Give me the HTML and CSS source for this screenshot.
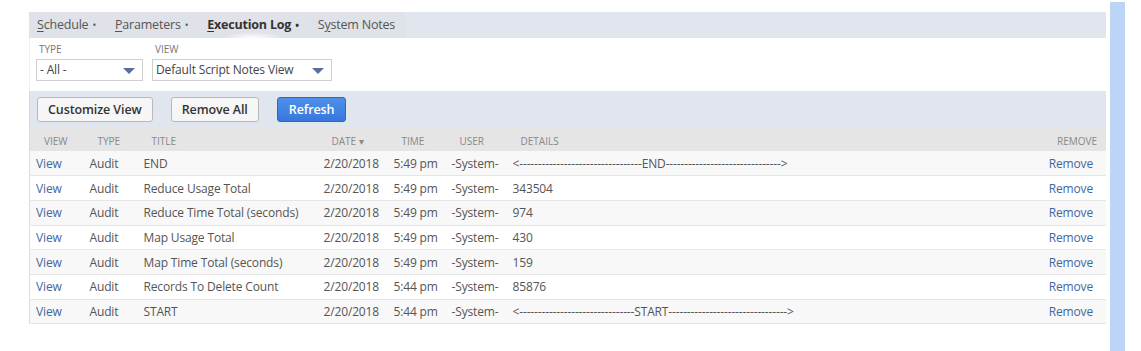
FILE: index.html
```html
<!DOCTYPE html>
<html>
<head>
    <title>Execution Log</title>
    <link rel="stylesheet" href="styles.css">
</head>
<body>
    <div id="page">
        <div id="main">
            <div class="tabbar">
                <div class="tabs">
                    <a href="#" class="tab"><u>S</u>chedule<span class="dot">&bull;</span></a>
                    <a href="#" class="tab"><u>P</u>arameters<span class="dot">&bull;</span></a>
                    <a href="#" class="tab active"><u>E</u>xecution Log<span class="dot">&bull;</span></a>
                    <a href="#" class="tab">S<u>y</u>stem Notes</a>
                </div>
            </div>
            <div class="filters">
                <div class="field">
                    <div class="flabel">TYPE</div>
                    <div class="sel sel_type"><span>- All -</span><i class="arrow"></i></div>
                </div>
                <div class="field">
                    <div class="flabel">VIEW</div>
                    <div class="sel sel_view"><span>Default Script Notes View</span><i class="arrow"></i></div>
                </div>
            </div>
            <div class="btnbar">
                <a href="#" class="btn">Customize View</a>
                <a href="#" class="btn">Remove All</a>
                <a href="#" class="btn primary">Refresh</a>
            </div>
            <table class="tbl_log">
                <colgroup>
                    <col style="width:54px">
                    <col style="width:54px">
                    <col style="width:180px">
                    <col style="width:70px">
                    <col style="width:58px">
                    <col style="width:61px">
                    <col>
                    <col style="width:100px">
                </colgroup>
                <tr class="head">
                    <td>VIEW</td>
                    <td>TYPE</td>
                    <td>TITLE</td>
                    <td>DATE &#9662;</td>
                    <td>TIME</td>
                    <td>USER</td>
                    <td>DETAILS</td>
                    <td class="rm">REMOVE</td>
                </tr>
                <tr>
                    <td><a href="#">View</a></td><td>Audit</td><td>END</td><td>2/20/2018</td><td>5:49 pm</td><td>-System-</td>
                    <td>&lt;---------------------------------END-------------------------------&gt;</td>
                    <td class="rm"><a href="#">Remove</a></td>
                </tr>
                <tr>
                    <td><a href="#">View</a></td><td>Audit</td><td>Reduce Usage Total</td><td>2/20/2018</td><td>5:49 pm</td><td>-System-</td>
                    <td>343504</td>
                    <td class="rm"><a href="#">Remove</a></td>
                </tr>
                <tr>
                    <td><a href="#">View</a></td><td>Audit</td><td>Reduce Time Total (seconds)</td><td>2/20/2018</td><td>5:49 pm</td><td>-System-</td>
                    <td>974</td>
                    <td class="rm"><a href="#">Remove</a></td>
                </tr>
                <tr>
                    <td><a href="#">View</a></td><td>Audit</td><td>Map Usage Total</td><td>2/20/2018</td><td>5:49 pm</td><td>-System-</td>
                    <td>430</td>
                    <td class="rm"><a href="#">Remove</a></td>
                </tr>
                <tr>
                    <td><a href="#">View</a></td><td>Audit</td><td>Map Time Total (seconds)</td><td>2/20/2018</td><td>5:49 pm</td><td>-System-</td>
                    <td>159</td>
                    <td class="rm"><a href="#">Remove</a></td>
                </tr>
                <tr>
                    <td><a href="#">View</a></td><td>Audit</td><td>Records To Delete Count</td><td>2/20/2018</td><td>5:44 pm</td><td>-System-</td>
                    <td>85876</td>
                    <td class="rm"><a href="#">Remove</a></td>
                </tr>
                <tr>
                    <td><a href="#">View</a></td><td>Audit</td><td>START</td><td>2/20/2018</td><td>5:44 pm</td><td>-System-</td>
                    <td>&lt;-------------------------------START--------------------------------&gt;</td>
                    <td class="rm"><a href="#">Remove</a></td>
                </tr>
            </table>
        </div>
        <div class="strip"></div>
    </div>
</body>
</html>
```

FILE: styles.css
```css
* {
    padding: 0px;
    margin: 0px;
    box-sizing: border-box;
}
body {
    font-family: "Open Sans", "Liberation Sans", sans-serif;
    color: #555;
    background-color: #fff;
}
a {
    text-decoration: none;
}
#page {
    display: flex;
    align-items: flex-start;
    height: 351px;
    overflow: hidden;
}
#main {
    width: 1077px;
    margin: 12px 0px 0px 29px;
}
.strip {
    width: 15px;
    height: 349px;
    margin: 2px 0px 0px 4px;
    background-color: #bcd4f6;
}
.tabbar {
    height: 26px;
    background-color: #e1e5ee;
}
.tabs {
    display: flex;
    width: 376px;
    height: 26px;
    padding-left: 8px;
    background-color: #dfe2e8;
}
.tab {
    font-size: 12.5px;
    letter-spacing: -0.2px;
    line-height: 26px;
    color: #555;
    margin-right: 19px;
    white-space: nowrap;
}
.tab u {
    text-decoration: underline;
    text-underline-offset: 2px;
}
.tab .dot {
    font-size: 10px;
    margin-left: 4px;
}
.tab.active {
    font-weight: bold;
    color: #333;
    background: radial-gradient(ellipse 30px 6px at 50% 100%, rgba(255,255,255,0.95), rgba(255,255,255,0));
}
.filters {
    display: flex;
    gap: 9px;
    height: 53px;
    padding: 5px 0px 0px 6px;
    border-left: 1px solid #f0f0f0;
}
.flabel {
    font-size: 10px;
    color: #777;
    line-height: 12px;
    padding-left: 3px;
    margin-bottom: 4px;
}
.sel {
    position: relative;
    height: 22px;
    border: 1px solid #cfcfcf;
    font-size: 12px;
    letter-spacing: -0.15px;
    line-height: 20px;
    color: #444;
    padding-left: 3px;
    background-color: #fff;
}
.sel_type {
    width: 107px;
}
.sel_view {
    width: 180px;
}
.arrow {
    position: absolute;
    right: 7px;
    top: 8px;
    width: 0;
    height: 0;
    border-left: 6px solid transparent;
    border-right: 6px solid transparent;
    border-top: 6px solid #56709c;
}
.btnbar {
    display: flex;
    gap: 18px;
    height: 36px;
    padding: 6px 0px 0px 7px;
    background-color: #e1e5ee;
    border-left: 1px solid #d6d9df;
}
.btn {
    height: 25px;
    line-height: 23px;
    padding: 0px 10px;
    font-size: 12.5px;
    letter-spacing: -0.1px;
    font-weight: 600;
    color: #333;
    background-color: #f6f6f6;
    border: 1px solid #b9b9b9;
    border-radius: 3px;
}
.btn.primary {
    color: #fff;
    padding: 0px 11px;
    background: linear-gradient(#4f90ea, #3777dc);
    border-color: #2d67c2;
}
.tbl_log {
    width: 100%;
    border-collapse: collapse;
    table-layout: fixed;
    font-size: 12px;
    letter-spacing: -0.15px;
    border-left: 1px solid #dcdcdc;
}
.tbl_log td {
    height: 24.7px;
    padding: 0px 6px;
    border-bottom: 1px solid #e6e6e6;
    white-space: nowrap;
    overflow: hidden;
}
.tbl_log tr:nth-child(even) td {
    background-color: #f8f8f8;
}
.tbl_log tr.head td {
    height: 24px;
    padding: 3px 0px 0px 14px;
    font-size: 10px;
    letter-spacing: 0px;
    color: #888;
    background-color: #e5e5e5;
    border-bottom: none;
}
.tbl_log tr.head td.rm {
    padding-right: 9px;
}
.tbl_log td.rm {
    text-align: right;
    padding-right: 13px;
}
.tbl_log a {
    color: #42679f;
}
```
